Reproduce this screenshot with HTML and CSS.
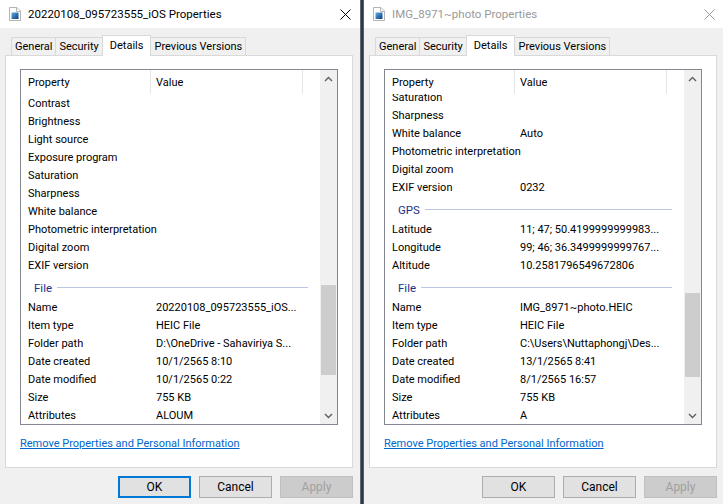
FILE: index.html
```html
<!DOCTYPE html>
<html lang="en">
<head>
  <meta charset="UTF-8" />
  <meta name="viewport" content="width=device-width, initial-scale=1.0" />
  <link rel="stylesheet" href="styles.css">
</head>
<body>
  <div class="screen">

    <!-- left window (active) -->
    <div class="dialog">
      <div class="titlebar">
        <svg class="file-icon" width="12" height="14" viewBox="0 0 12 14">
          <defs>
            <linearGradient id="pic1" x1="0" y1="0" x2="1" y2="1">
              <stop offset="0" stop-color="#5fb0ee"/>
              <stop offset="1" stop-color="#0b3a78"/>
            </linearGradient>
          </defs>
          <path d="M0.5 0.5h7.5l3.5 3.5v9.5h-11z" fill="#fff" stroke="#b4b4b4"/>
          <path d="M7.5 0.5v4h4" fill="none" stroke="#b4b4b4"/>
          <rect x="2.5" y="5.5" width="7" height="6.5" fill="url(#pic1)"/>
        </svg>
        <span class="title">20220108_095723555_iOS Properties</span>
        <svg class="close" width="11" height="11" viewBox="0 0 11 11">
          <path d="M0.5 0.5l10 10M10.5 0.5l-10 10" stroke="#000" stroke-width="1"/>
        </svg>
      </div>

      <div class="tabs">
        <div class="tab">General</div>
        <div class="tab">Security</div>
        <div class="tab selected">Details</div>
        <div class="tab">Previous Versions</div>
      </div>

      <div class="panel">
        <div class="listbox">
          <div class="list-main">
            <div class="list-head">
              <div class="col-prop">Property</div>
              <div class="col-val">Value</div>
              <div class="col-end"></div>
            </div>
            <div class="list-body">
              <div class="row"><span class="prop">Contrast</span><span class="val"></span></div>
              <div class="row"><span class="prop">Brightness</span><span class="val"></span></div>
              <div class="row"><span class="prop">Light source</span><span class="val"></span></div>
              <div class="row"><span class="prop">Exposure program</span><span class="val"></span></div>
              <div class="row"><span class="prop">Saturation</span><span class="val"></span></div>
              <div class="row"><span class="prop">Sharpness</span><span class="val"></span></div>
              <div class="row"><span class="prop">White balance</span><span class="val"></span></div>
              <div class="row"><span class="prop">Photometric interpretation</span><span class="val"></span></div>
              <div class="row"><span class="prop">Digital zoom</span><span class="val"></span></div>
              <div class="row"><span class="prop">EXIF version</span><span class="val"></span></div>
              <div class="group"><span>File</span><i class="rule"></i></div>
              <div class="row"><span class="prop">Name</span><span class="val">20220108_095723555_iOS...</span></div>
              <div class="row"><span class="prop">Item type</span><span class="val">HEIC File</span></div>
              <div class="row"><span class="prop">Folder path</span><span class="val">D:\OneDrive - Sahaviriya S...</span></div>
              <div class="row"><span class="prop">Date created</span><span class="val">10/1/2565 8:10</span></div>
              <div class="row"><span class="prop">Date modified</span><span class="val">10/1/2565 0:22</span></div>
              <div class="row"><span class="prop">Size</span><span class="val">755 KB</span></div>
              <div class="row"><span class="prop">Attributes</span><span class="val">ALOUM</span></div>
            </div>
          </div>
          <div class="scrollbar">
            <div class="arrow">
              <svg width="9" height="6" viewBox="0 0 9 6"><path d="M1 5l3.5-3.5L8 5" fill="none" stroke="#606060" stroke-width="1.4"/></svg>
            </div>
            <div class="track"><div class="thumb thumb-a"></div></div>
            <div class="arrow">
              <svg width="9" height="6" viewBox="0 0 9 6"><path d="M1 1l3.5 3.5L8 1" fill="none" stroke="#606060" stroke-width="1.4"/></svg>
            </div>
          </div>
        </div>
        <a class="link" href="#">Remove Properties and Personal Information</a>
      </div>

      <div class="buttons">
        <button class="btn default">OK</button>
        <button class="btn">Cancel</button>
        <button class="btn" disabled>Apply</button>
      </div>
    </div>

    <div class="divider"></div>

    <!-- right window (inactive) -->
    <div class="dialog inactive">
      <div class="titlebar">
        <svg class="file-icon" width="12" height="14" viewBox="0 0 12 14">
          <defs>
            <linearGradient id="pic2" x1="0" y1="0" x2="1" y2="1">
              <stop offset="0" stop-color="#5fb0ee"/>
              <stop offset="1" stop-color="#0b3a78"/>
            </linearGradient>
          </defs>
          <path d="M0.5 0.5h7.5l3.5 3.5v9.5h-11z" fill="#fff" stroke="#b4b4b4"/>
          <path d="M7.5 0.5v4h4" fill="none" stroke="#b4b4b4"/>
          <rect x="2.5" y="5.5" width="7" height="6.5" fill="url(#pic2)"/>
        </svg>
        <span class="title">IMG_8971~photo Properties</span>
        <svg class="close" width="11" height="11" viewBox="0 0 11 11">
          <path d="M0.5 0.5l10 10M10.5 0.5l-10 10" stroke="#999" stroke-width="1"/>
        </svg>
      </div>

      <div class="tabs">
        <div class="tab">General</div>
        <div class="tab">Security</div>
        <div class="tab selected">Details</div>
        <div class="tab">Previous Versions</div>
      </div>

      <div class="panel">
        <div class="listbox">
          <div class="list-main">
            <div class="list-head">
              <div class="col-prop">Property</div>
              <div class="col-val">Value</div>
              <div class="col-end"></div>
            </div>
            <div class="list-body">
              <div class="row scrolled"><span class="prop">Saturation</span><span class="val"></span></div>
              <div class="row"><span class="prop">Sharpness</span><span class="val"></span></div>
              <div class="row"><span class="prop">White balance</span><span class="val">Auto</span></div>
              <div class="row"><span class="prop">Photometric interpretation</span><span class="val"></span></div>
              <div class="row"><span class="prop">Digital zoom</span><span class="val"></span></div>
              <div class="row"><span class="prop">EXIF version</span><span class="val">0232</span></div>
              <div class="group"><span>GPS</span><i class="rule"></i></div>
              <div class="row"><span class="prop">Latitude</span><span class="val">11; 47; 50.4199999999983...</span></div>
              <div class="row"><span class="prop">Longitude</span><span class="val">99; 46; 36.3499999999767...</span></div>
              <div class="row"><span class="prop">Altitude</span><span class="val">10.2581796549672806</span></div>
              <div class="group"><span>File</span><i class="rule"></i></div>
              <div class="row"><span class="prop">Name</span><span class="val">IMG_8971~photo.HEIC</span></div>
              <div class="row"><span class="prop">Item type</span><span class="val">HEIC File</span></div>
              <div class="row"><span class="prop">Folder path</span><span class="val">C:\Users\Nuttaphongj\Des...</span></div>
              <div class="row"><span class="prop">Date created</span><span class="val">13/1/2565 8:41</span></div>
              <div class="row"><span class="prop">Date modified</span><span class="val">8/1/2565 16:57</span></div>
              <div class="row"><span class="prop">Size</span><span class="val">755 KB</span></div>
              <div class="row"><span class="prop">Attributes</span><span class="val">A</span></div>
            </div>
          </div>
          <div class="scrollbar">
            <div class="arrow">
              <svg width="9" height="6" viewBox="0 0 9 6"><path d="M1 5l3.5-3.5L8 5" fill="none" stroke="#606060" stroke-width="1.4"/></svg>
            </div>
            <div class="track"><div class="thumb thumb-b"></div></div>
            <div class="arrow">
              <svg width="9" height="6" viewBox="0 0 9 6"><path d="M1 1l3.5 3.5L8 1" fill="none" stroke="#606060" stroke-width="1.4"/></svg>
            </div>
          </div>
        </div>
        <a class="link" href="#">Remove Properties and Personal Information</a>
      </div>

      <div class="buttons">
        <button class="btn">OK</button>
        <button class="btn">Cancel</button>
        <button class="btn" disabled>Apply</button>
      </div>
    </div>

  </div>
</body>
</html>
```

FILE: styles.css
```css
* {
  box-sizing: border-box;
}
body {
  margin: 0;
  font-family: "Segoe UI", Roboto, "Noto Sans", sans-serif;
  font-size: 11px;
  color: #000;
  background: #f0f0f0;
  overflow: hidden;
}
.screen {
  display: flex;
  width: 723px;
  height: 504px;
  overflow: hidden;
}

/* window */
.dialog {
  flex: none;
  width: 360px;
  height: 504px;
  background: #f0f0f0;
}
.divider {
  flex: none;
  width: 4px;
  background: linear-gradient(to right, #7b8591, #2d3945 35%, #2d3945 70%, #6f7a86);
}

.titlebar {
  display: flex;
  align-items: center;
  height: 28px;
  padding: 0 9px;
  background: #fff;
}
.file-icon {
  flex: none;
}
.title {
  flex: 1;
  margin-left: 7px;
  font-size: 11.5px;
  line-height: 28px;
  white-space: nowrap;
}
.close {
  flex: none;
}
.inactive .title {
  color: #999;
}

/* tabs */
.tabs {
  display: flex;
  align-items: flex-end;
  height: 27px;
  margin-left: 11px;
}
.tab {
  height: 18px;
  padding: 0 3px;
  line-height: 18px;
  border: 1px solid #d9d9d9;
  border-bottom: none;
  background: #f0f0f0;
  white-space: nowrap;
}
.tab + .tab {
  margin-left: -1px;
}
.tab.selected {
  position: relative;
  z-index: 1;
  height: 21px;
  margin-bottom: -1px;
  padding: 0 7px;
  line-height: 19px;
  background: #fff;
}

/* page */
.panel {
  width: 348px;
  height: 413px;
  margin-left: 5px;
  padding: 13px 0 0 14px;
  border: 1px solid #d9d9d9;
  background: #fff;
}
.listbox {
  display: flex;
  width: 318px;
  height: 356px;
  border: 1px solid #828790;
  background: #fff;
}
.list-main {
  flex: 1;
  display: flex;
  flex-direction: column;
  min-width: 0;
}
.list-head {
  display: flex;
  height: 24px;
  line-height: 26px;
}
.col-prop {
  width: 130px;
  padding-left: 7px;
  border-right: 1px solid #e5e5e5;
}
.col-val {
  width: 152px;
  padding-left: 5px;
  border-right: 1px solid #e5e5e5;
}
.col-end {
  flex: 1;
}
.list-body {
  flex: 1;
  overflow: hidden;
}
.row {
  display: flex;
  height: 18px;
  padding-top: 1px;
  line-height: 18px;
  white-space: nowrap;
}
.row.scrolled {
  margin-top: -6px;
}
.prop {
  flex: none;
  width: 135px;
  padding-left: 7px;
}
.val {
  flex: 1;
  overflow: hidden;
}
.group {
  display: flex;
  align-items: center;
  height: 24px;
  padding: 3px 12px 0 13px;
  font-size: 11.5px;
  color: #1e3287;
}
.rule {
  flex: 1;
  height: 1px;
  margin-left: 5px;
  background: #b9c6e2;
}

/* scrollbar */
.scrollbar {
  flex: none;
  display: flex;
  flex-direction: column;
  width: 17px;
  background: #f0f0f0;
}
.arrow {
  display: flex;
  align-items: center;
  justify-content: center;
  height: 17px;
}
.track {
  flex: 1;
}
.thumb {
  width: 15px;
  margin-left: 1px;
  background: #cdcdcd;
}
.thumb-a {
  height: 90px;
  margin-top: 198px;
}
.thumb-b {
  height: 84px;
  margin-top: 206px;
}

.link {
  display: inline-block;
  margin-top: 9px;
  line-height: 19px;
  color: #0066cc;
  text-decoration: underline;
}

/* buttons */
.buttons {
  display: flex;
  justify-content: flex-end;
  gap: 8px;
  margin-top: 8px;
  padding-right: 7px;
}
.btn {
  width: 73px;
  height: 22px;
  padding: 0;
  font: inherit;
  font-size: 12px;
  color: #000;
  background: #e1e1e1;
  border: 1px solid #adadad;
}
.btn.default {
  border: 2px solid #0078d7;
}
.btn:disabled {
  color: #a0a0a0;
  background: #cccccc;
  border-color: #bfbfbf;
}
```
